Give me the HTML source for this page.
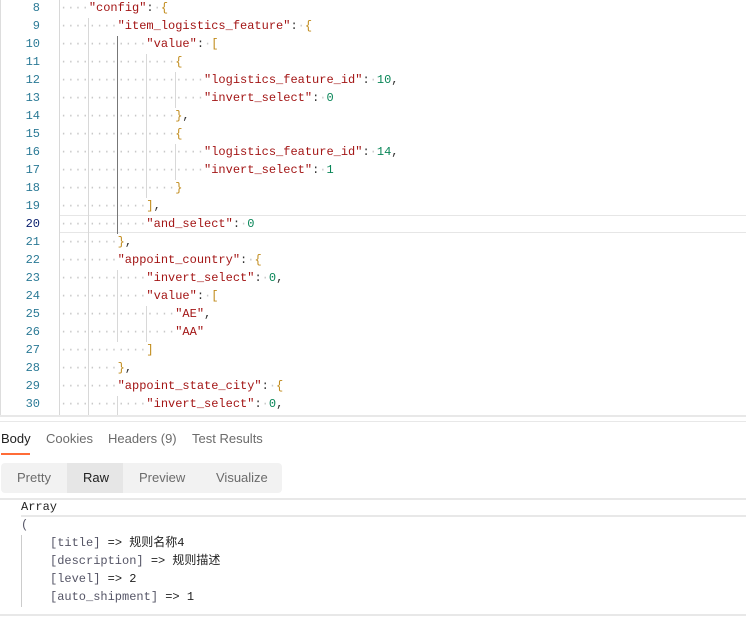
<!DOCTYPE html>
<html><head><meta charset="utf-8"><style>
body{margin:0;width:746px;height:618px;background:#fff;position:relative;overflow:hidden;font-family:"Liberation Sans",sans-serif}
.ed{position:absolute;left:0;top:0;width:746px;height:416px;overflow:hidden;border-left:1px solid #ddd;box-sizing:border-box}
.ln{position:absolute;left:0;width:39px;text-align:right;font:12px/18px "Liberation Mono",monospace;color:#2b7a96}
.c{position:absolute;left:59px;font:12px/18px "Liberation Mono",monospace;color:#333;white-space:pre}
.d{color:#c8c8c8}.k{color:#a31515}.n{color:#098658}.b{color:#c08a1a}
.g{position:absolute;width:1px;background:#d8d8d8}
.hl{position:absolute;left:58px;right:0;top:215px;height:18px;border-top:1px solid #e6e6e6;border-bottom:1px solid #e6e6e6;box-sizing:border-box}
.hr{position:absolute;left:0;right:0;height:2px;background:#e8e8e8}
.tab{position:absolute;top:431px;font-size:13px;color:#6b6b6b}
.seg{position:absolute;left:1px;top:463px;width:281px;height:30px;background:#f2f2f2;border-radius:4px}
.s{position:absolute;top:470px;font-size:13px;color:#6b6b6b}
.r{position:absolute;font:12px/18px "Liberation Mono","Noto Sans CJK SC",monospace;color:#222;white-space:pre}
.r .p{color:#556}
</style></head><body>
<div class="ed">
<div class="hl"></div>
<div class="g" style="left:58px;top:0;height:416px"></div>
<div class="g" style="left:87px;top:18px;height:398px"></div>
<div class="g" style="left:116px;top:36px;height:198px;background:#777"></div>
<div class="g" style="left:116px;top:270px;height:72px"></div>
<div class="g" style="left:116px;top:396px;height:20px"></div>
<div class="g" style="left:145px;top:54px;height:144px"></div>
<div class="g" style="left:145px;top:306px;height:36px"></div>
<div class="g" style="left:174px;top:72px;height:36px"></div>
<div class="g" style="left:174px;top:144px;height:36px"></div>

<div class="ln" style="top:-1px">8</div><div class="c" style="top:-1px"><span class="d">····</span><span class="k">"config"</span>:<span class="d">·</span><span class="b">{</span></div>
<div class="ln" style="top:17px">9</div><div class="c" style="top:17px"><span class="d">········</span><span class="k">"item_logistics_feature"</span>:<span class="d">·</span><span class="b">{</span></div>
<div class="ln" style="top:35px">10</div><div class="c" style="top:35px"><span class="d">············</span><span class="k">"value"</span>:<span class="d">·</span><span class="b">[</span></div>
<div class="ln" style="top:53px">11</div><div class="c" style="top:53px"><span class="d">················</span><span class="b">{</span></div>
<div class="ln" style="top:71px">12</div><div class="c" style="top:71px"><span class="d">····················</span><span class="k">"logistics_feature_id"</span>:<span class="d">·</span><span class="n">10</span>,</div>
<div class="ln" style="top:89px">13</div><div class="c" style="top:89px"><span class="d">····················</span><span class="k">"invert_select"</span>:<span class="d">·</span><span class="n">0</span></div>
<div class="ln" style="top:107px">14</div><div class="c" style="top:107px"><span class="d">················</span><span class="b">}</span>,</div>
<div class="ln" style="top:125px">15</div><div class="c" style="top:125px"><span class="d">················</span><span class="b">{</span></div>
<div class="ln" style="top:143px">16</div><div class="c" style="top:143px"><span class="d">····················</span><span class="k">"logistics_feature_id"</span>:<span class="d">·</span><span class="n">14</span>,</div>
<div class="ln" style="top:161px">17</div><div class="c" style="top:161px"><span class="d">····················</span><span class="k">"invert_select"</span>:<span class="d">·</span><span class="n">1</span></div>
<div class="ln" style="top:179px">18</div><div class="c" style="top:179px"><span class="d">················</span><span class="b">}</span></div>
<div class="ln" style="top:197px">19</div><div class="c" style="top:197px"><span class="d">············</span><span class="b">]</span>,</div>
<div class="ln" style="top:215px;color:#0b216f">20</div><div class="c" style="top:215px"><span class="d">············</span><span class="k">"and_select"</span>:<span class="d">·</span><span class="n">0</span></div>
<div class="ln" style="top:233px">21</div><div class="c" style="top:233px"><span class="d">········</span><span class="b">}</span>,</div>
<div class="ln" style="top:251px">22</div><div class="c" style="top:251px"><span class="d">········</span><span class="k">"appoint_country"</span>:<span class="d">·</span><span class="b">{</span></div>
<div class="ln" style="top:269px">23</div><div class="c" style="top:269px"><span class="d">············</span><span class="k">"invert_select"</span>:<span class="d">·</span><span class="n">0</span>,</div>
<div class="ln" style="top:287px">24</div><div class="c" style="top:287px"><span class="d">············</span><span class="k">"value"</span>:<span class="d">·</span><span class="b">[</span></div>
<div class="ln" style="top:305px">25</div><div class="c" style="top:305px"><span class="d">················</span><span class="k">"AE"</span>,</div>
<div class="ln" style="top:323px">26</div><div class="c" style="top:323px"><span class="d">················</span><span class="k">"AA"</span></div>
<div class="ln" style="top:341px">27</div><div class="c" style="top:341px"><span class="d">············</span><span class="b">]</span></div>
<div class="ln" style="top:359px">28</div><div class="c" style="top:359px"><span class="d">········</span><span class="b">}</span>,</div>
<div class="ln" style="top:377px">29</div><div class="c" style="top:377px"><span class="d">········</span><span class="k">"appoint_state_city"</span>:<span class="d">·</span><span class="b">{</span></div>
<div class="ln" style="top:395px">30</div><div class="c" style="top:395px"><span class="d">············</span><span class="k">"invert_select"</span>:<span class="d">·</span><span class="n">0</span>,</div>
</div>
<div class="hr" style="top:415px"></div>
<div class="hr" style="top:421px;height:1px"></div>
<div class="tab" style="left:1px;color:#212121">Body</div>
<div style="position:absolute;left:1px;top:453px;width:29px;height:2px;background:#ff6c37"></div>
<div class="tab" style="left:46px">Cookies</div>
<div class="tab" style="left:108px">Headers (9)</div>
<div class="tab" style="left:192px">Test Results</div>
<div class="seg"></div>
<div style="position:absolute;left:67px;top:463px;width:56px;height:30px;background:#e6e6e6"></div>
<div class="s" style="left:17px">Pretty</div>
<div class="s" style="left:83px;color:#212121">Raw</div>
<div class="s" style="left:139px">Preview</div>
<div class="s" style="left:216px">Visualize</div>
<div class="hr" style="top:498px"></div>
<div class="hr" style="top:515px;height:2px;left:21px"></div>
<div class="r" style="left:21px;top:498px">Array</div>
<div class="r" style="left:21px;top:516px"><span class="p">(</span></div>
<div style="position:absolute;left:21px;top:535px;width:1px;height:72px;background:#ccc"></div>
<div class="r" style="left:50px;top:534px"><span class="p">[title]</span> =&gt; 规则名称4</div>
<div class="r" style="left:50px;top:552px"><span class="p">[description]</span> =&gt; 规则描述</div>
<div class="r" style="left:50px;top:570px"><span class="p">[level]</span> =&gt; 2</div>
<div class="r" style="left:50px;top:588px"><span class="p">[auto_shipment]</span> =&gt; 1</div>
<div class="hr" style="top:614px"></div>
</body></html>
